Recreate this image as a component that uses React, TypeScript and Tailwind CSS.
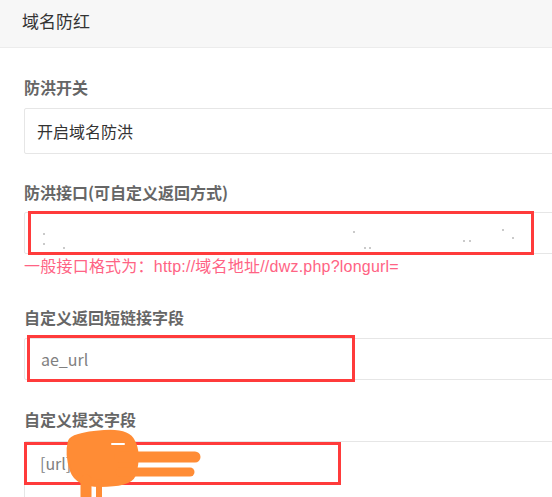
const FONT = '"Noto Sans CJK SC", "Open Sans", sans-serif'

function Label({ children, className = '' }: { children: React.ReactNode; className?: string }) {
  return (
    <div className={`text-[16px] leading-[22px] font-bold text-[#666] ${className}`}>
      {children}
    </div>
  )
}

// tiny leftovers of the erased api address
const DOTS: Array<[number, number]> = [
  [18, 20], [18, 30], [38, 34], [328, 18], [339, 34], [344, 34],
  [438, 27], [444, 27], [477, 16], [487, 24],
]

export default function App() {
  return (
    <div
      className="relative w-[552px] h-[497px] overflow-hidden bg-white"
      style={{ fontFamily: FONT }}
    >
      <div className="h-[48px] bg-[#f7f7f7] border-b border-[#ececec] px-[22px] pt-[9px]">
        <span className="text-[17px] leading-[24px] text-[#333]">域名防红</span>
      </div>

      <div className="pl-[24px] pt-[28px]">
        <Label>防洪开关</Label>
        <div className="mt-[10px] w-[600px] h-[46px] border border-[#e6e6e6] rounded-[2px] flex items-center pl-[12px] text-[16px] text-[#333]">
          开启域名防洪
        </div>

        <Label className="mt-[27px]">防洪接口(可自定义返回方式)</Label>
        <div className="relative mt-[9px] w-[600px] h-[42px] border border-[#e6e6e6] rounded-[2px]">
          {DOTS.map(([x, y], i) => (
            <span
              key={i}
              className="absolute w-[2px] h-[2px] rounded-full bg-[#b8b8b8]"
              style={{ left: x, top: y }}
            />
          ))}
          <div className="absolute left-[3px] top-[-2px] w-[506px] h-[44px] border-[3px] border-[#ff3b3b]" />
        </div>
        <div
          className="mt-[4px] text-[16px] leading-[18px] tracking-[0.22px] text-[#ff6384]"
          style={{ fontFamily: '"Liberation Sans", "Noto Sans CJK SC", sans-serif' }}
        >
          一般接口格式为：http://域名地址//dwz.php?longurl=
        </div>

        <Label className="mt-[30px]">自定义返回短链接字段</Label>
        <div className="relative mt-[10px] w-[600px] h-[42px] border border-[#e6e6e6] rounded-[2px] flex items-center pl-[16px] text-[16px] text-[#808080]">
          ae_url
          <div className="absolute left-[2px] top-[-4px] w-[328px] h-[47px] border-[3px] border-[#ff3b3b]" />
        </div>

        <Label className="mt-[28px]">自定义提交字段</Label>
        <div className="relative mt-[11px] w-[600px] h-[80px] border border-[#e6e6e6] rounded-[2px] pl-[15px] pt-[10px] text-[16px] leading-[22px] text-[#808080]">
          [url]&amp;
          <div className="absolute left-[-1px] top-[0px] w-[317px] h-[43px] border-[3px] border-[#ff3b3b]" />
        </div>
      </div>

      <svg
        className="absolute left-0 top-0 pointer-events-none"
        width="552"
        height="497"
        viewBox="0 0 552 497"
      >
        <g fill="#ff8c35" stroke="#ff8c35" strokeLinecap="round" strokeLinejoin="round">
          <path
            d="M69 441 C71 434 90 432 104 431 C118 430 130 432 134 441 C139 450 138 464 135 475 C131 484 118 486 100 486 C85 486 75 482 71 471 C67 459 67 448 69 441 Z"
            strokeWidth="2"
          />
          <path d="M120 457 L195 457" strokeWidth="11" fill="none" />
          <path d="M120 472 L190 472" strokeWidth="9" fill="none" />
          <path d="M86 480 L86 496" strokeWidth="11" fill="none" />
          <path d="M99 482 L99 497" strokeWidth="6" fill="none" />
        </g>
        <path d="M112 444 L124 444" stroke="#ffffff" strokeWidth="2" strokeLinecap="round" />
      </svg>
    </div>
  )
}
